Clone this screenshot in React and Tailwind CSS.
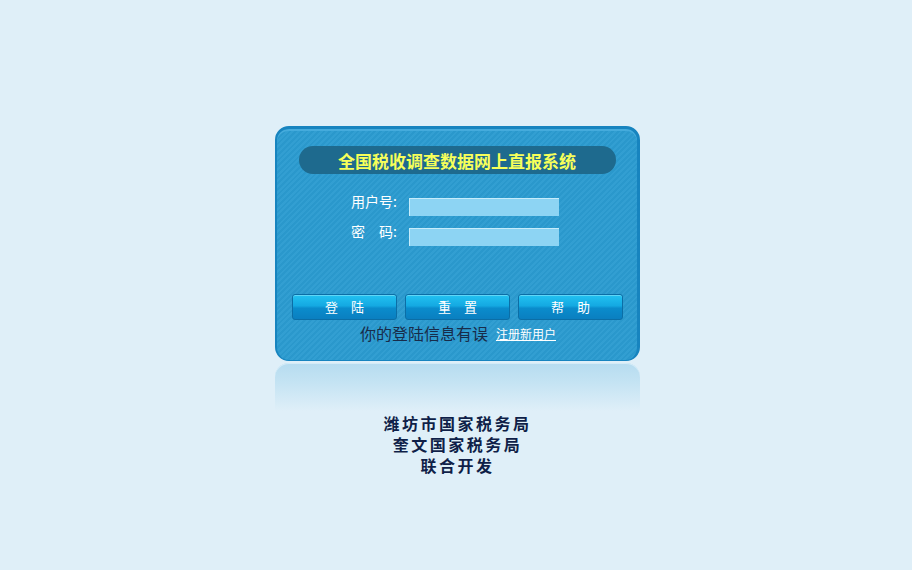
const cjk = "font-['Noto_Sans_CJK_SC',sans-serif]"

const Button = ({ label }) => {
  return (
    <button
      type="button"
      className={`h-[26px] w-[105px] rounded-[3px] border border-[#0b6ea6] bg-[linear-gradient(to_bottom,#22c2f2_0%,#14a9e2_45%,#0a8ccc_55%,#0a7fc0_100%)] text-[13px] text-white shadow-[inset_0_1px_0_#5fd6f7] ${cjk}`}
    >
      {label}
    </button>
  )
}

const App = () => {
  return (
    <div className={`min-h-[570px] w-full bg-[#dfeff8] ${cjk}`}>
      <div className="flex flex-col items-center pt-[126px] pl-[3px]">
        <div className="w-[365px] rounded-[14px] border-t-[3px] border-r-[3px] border-l-[2px] border-b border-[#1784bf] bg-[#2b9bd0] bg-[repeating-linear-gradient(135deg,rgba(255,255,255,0.035)_0px,rgba(255,255,255,0.035)_2px,rgba(0,0,0,0.02)_2px,rgba(0,0,0,0.02)_4px)] shadow-[inset_0_2px_0_#45abdc]">
          <div className="h-[231px] pt-[17px]">
            <div className="mx-auto flex h-[28px] w-[317px] items-center justify-center rounded-full bg-[#1e6a8e]">
              <span className="text-[17px] font-bold leading-none text-[#f6ff5a]">全国税收调查数据网上直报系统</span>
            </div>

            <div className="mt-[24px] flex flex-col gap-[12px] pl-[74px]">
              <div className="flex items-start">
                <span className="-mt-[5px] w-[58px] text-[14px] leading-[16px] text-white">用户号:</span>
                <input
                  type="text"
                  className="h-[18px] w-[150px] border-t border-l border-t-[#c6ecfb] border-l-[#c6ecfb] bg-[#8dd4f3] outline-none"
                />
              </div>
              <div className="flex items-start">
                <span className="-mt-[5px] w-[58px] text-[14px] leading-[16px] text-white">密　码:</span>
                <input
                  type="password"
                  className="h-[18px] w-[150px] border-t border-l border-t-[#c6ecfb] border-l-[#c6ecfb] bg-[#8dd4f3] outline-none"
                />
              </div>
            </div>

            <div className="mt-[48px] flex gap-[8px] pl-[15px]">
              <Button label="登　陆" />
              <Button label="重　置" />
              <Button label="帮　助" />
            </div>

            <div className="mt-[1px] flex items-center justify-center gap-[8px] pl-[2px]">
              <span className="text-[16px] leading-[24px] text-[#182c4a]">你的登陆信息有误</span>
              <a href="#" className="mt-[2px] text-[12px] leading-none text-white underline">
                注册新用户
              </a>
            </div>
          </div>
        </div>

        <div className="mt-[2px] h-[48px] w-[365px] rounded-t-[14px] bg-[linear-gradient(to_bottom,#b6dcf0_0%,#c4e3f3_40%,#dfeff8_100%)] shadow-[inset_0_1px_0_#d4ecf8]"></div>

        <p className="mt-[2px] text-center text-[16px] font-bold leading-[21px] tracking-[2.5px] text-[#0f1f48]">
          潍坊市国家税务局
          <br />
          奎文国家税务局
          <br />
          联合开发
        </p>
      </div>
    </div>
  )
}

export default App
